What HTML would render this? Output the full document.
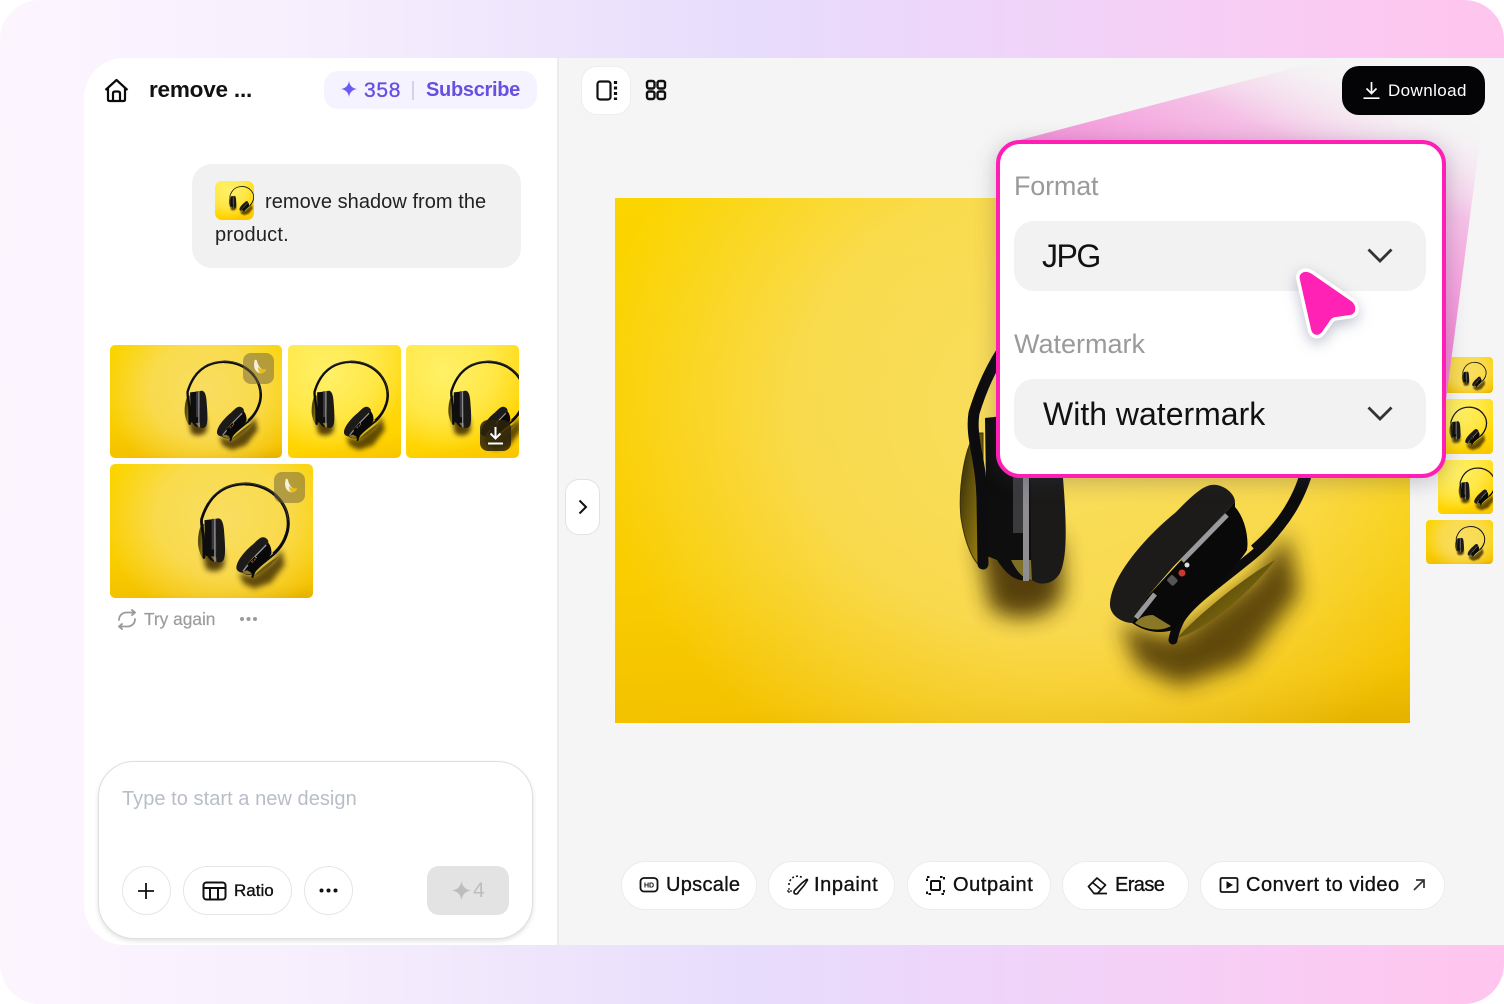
<!DOCTYPE html>
<html><head><meta charset="utf-8">
<style>
*{box-sizing:border-box;margin:0;padding:0}
html,body{width:1504px;height:1004px;overflow:hidden;background:#fff}
body{font-family:"Liberation Sans",sans-serif;color:#111;position:relative}
.a{position:absolute}
#bg{left:0;top:0;width:1504px;height:1004px;border-radius:40px;background:linear-gradient(90deg,#fdf5fe 0%,#f7effd 20%,#e7dcfc 50%,#f2d2f8 72%,#ffc5ee 100%)}
#left{left:84px;top:58px;width:475px;height:887px;background:#fff;border-radius:40px 0 0 40px;border-right:2px solid #ececec}
#right{left:559px;top:58px;width:945px;height:887px;background:#f5f5f5}
.t{position:absolute;white-space:nowrap;line-height:1}
.m{-webkit-text-stroke:.35px currentColor}
.img{position:absolute;overflow:hidden}
.img svg{position:absolute;left:0;top:0;width:100%;height:100%;display:block}
.by{background:radial-gradient(ellipse 58% 78% at 55% 40%,#f9dd60 0%,rgba(249,221,96,.8) 55%,rgba(249,221,96,0) 100%),linear-gradient(176deg,#fbd500 0%,#f9cd00 65%,#f4c200 90%,#e4b200 100%)}
.bb{background:radial-gradient(ellipse 70% 70% at 35% 25%,#fff067 0%,rgba(255,240,103,.6) 60%,rgba(255,240,103,0) 100%),linear-gradient(170deg,#ffe02a 0%,#ffd400 80%,#f8c400 100%)}
.pill{position:absolute;top:861px;height:49px;background:#fff;border:1px solid #ececec;border-radius:25px}
.ci{position:absolute;background:#fff;border:1.5px solid #e6e6e6}
.sel{position:absolute;left:1014px;width:412px;height:70px;background:#f2f2f2;border-radius:20px}
.badge{position:absolute;width:31px;height:31px;border-radius:8px;background:rgba(110,95,60,.5)}
</style></head><body>
<svg width="0" height="0" style="position:absolute">
<defs>
<filter id="b1" x="-60%" y="-60%" width="220%" height="220%"><feGaussianBlur stdDeviation="11"/></filter>
<linearGradient id="ray" gradientUnits="userSpaceOnUse" x1="1267" y1="264" x2="1359" y2="63">
<stop offset="0" stop-color="#f68cd8"/><stop offset=".55" stop-color="#f5c0e6"/><stop offset="1" stop-color="#f5f5f5" stop-opacity="0"/></linearGradient>
<linearGradient id="pl" x1="0" y1="0" x2="1" y2="1"><stop offset="0" stop-color="#2a2608"/><stop offset="1" stop-color="#a98a10"/></linearGradient>
<g id="hp">
<path d="M362 340L445 340L448 395C440 420 400 428 375 410Z" fill="#3a2600" opacity=".85" filter="url(#b1)"/>
<path d="M505 425L560 440L640 380L672 335L684 395L630 465L565 488L522 468Z" fill="#3a2600" opacity=".8" filter="url(#b1)"/>
<path d="M362 235C350 245 343 290 346 320C350 345 358 365 368 370L368 235Z" fill="url(#pl)" stroke="#3a3208" stroke-width="1"/>
<path d="M370 220L415 215L417 382C405 384 395 382 382 362L372 358Z" fill="#0e0e0e"/>
<path d="M396 362C402 374 408 381 417 382L416 362Z" fill="#7d6f26"/>
<rect x="398" y="215" width="14" height="120" fill="#3a3a3d"/>
<rect x="408" y="215" width="6" height="168" fill="#8d8d92"/>
<path d="M414 215C438 205 446 230 448 280C452 330 452 360 445 375C438 387 425 388 417 382L416 355Z" fill="#1b1a18"/>
<path d="M527 78C440 80 385 130 359 215C355 240 366 260 367 300L368 366" fill="none" stroke="#0d0d0f" stroke-width="11" stroke-linecap="round"/>
<path d="M527 78C640 78 715 170 695 262C686 300 668 328 640 352" fill="none" stroke="#0d0d0f" stroke-width="12"/>
<path d="M385 150C410 105 465 78 525 75C620 76 690 135 698 220" fill="none" stroke="#57575c" stroke-width="2"/>
<path d="M562 440C590 432 630 400 660 362C632 378 590 410 562 440Z" fill="url(#pl)"/>
<path d="M688 280C678 315 658 342 632 362C600 388 575 405 565 422C561 430 559 436 558 442" fill="none" stroke="#0c0c0e" stroke-width="9" stroke-linecap="round"/>
<path d="M620 309C630 320 634 340 632 352C625 365 590 400 558 432C545 436 530 434 517 425L532 399L620 304Z" fill="#090909"/>
<path d="M520 425C530 432 545 434 556 428L538 417C530 417 524 420 520 425Z" fill="#8a7826"/>
<path d="M495 405C497 375 535 335 560 315C580 295 590 285 602 287C612 289 620 297 620 304L592 334L558 369L532 399L517 425C508 425 494 418 495 405Z" fill="#1c1b19"/>
<path d="M521 420L540 396M567 363L612 317" fill="none" stroke="#9a9a9e" stroke-width="5"/>
<circle cx="567" cy="375" r="3.500" fill="#c9392e"/>
<circle cx="572" cy="367" r="2.500" fill="#ddd"/>
<rect x="553" y="378" width="8" height="9" rx="2" fill="#555" transform="rotate(-45 557 382)"/>
</g>
<path id="st" d="M8 0C8.700 4.600 11.400 7.300 16 8C11.400 8.700 8.700 11.400 8 16C7.300 11.400 4.600 8.700 0 8C4.600 7.300 7.300 4.600 8 0Z"/>
<g id="ban"><path d="M7 2C5 7 6 13 11 15C14 16 17 14 17 12C13 12 10 8 9 3Z" fill="#f5f0da"/><path d="M10 9C12 11 15 12 18 11C18 14 15 16 12 15C10.500 14 10 11 10 9Z" fill="#e8bf12"/><path d="M6 3L8 1.500L9 3" fill="#f5f0da"/></g>
</defs></svg>

<div id="bg" class="a"></div>
<div id="left" class="a"></div>
<div id="right" class="a"></div>

<svg class="a" style="left:104px;top:78px" width="25" height="25" viewBox="0 0 25 25" fill="none" stroke="#0b0b0b" stroke-width="2.200" stroke-linejoin="round"><path d="M1.500 12L12.500 2L23.500 12"/><path d="M4 10V21.500Q4 23 5.500 23H19.500Q21 23 21 21.500V10"/><path d="M9 23V15.500Q9 13.500 11 13.500H14Q16 13.500 16 15.500V23"/></svg>
<div class="t" style="left:149px;top:79px;font-size:22.500px;font-weight:700;letter-spacing:-.2px">remove ...</div>

<div class="a" style="left:324px;top:71px;width:213px;height:38px;background:#f5f3ff;border-radius:14px"></div>
<svg class="a" style="left:341px;top:81px;fill:#6a5cf0" width="16" height="16" viewBox="0 0 16 16"><use href="#st"/></svg>
<div class="t m" style="left:364px;top:80px;font-size:21px;color:#6650e0;letter-spacing:.7px">358</div>
<div class="a" style="left:412px;top:81px;width:1.500px;height:19px;background:#d5d0ee"></div>
<div class="t" style="left:426px;top:80px;font-size:20px;color:#6650e0;font-weight:700;letter-spacing:-.3px">Subscribe</div>

<div class="a" style="left:192px;top:164px;width:329px;height:104px;background:#f1f1f1;border-radius:20px"></div>
<div class="img bb" style="left:215px;top:181px;width:39px;height:39px;border-radius:7px"><svg viewBox="146 0 557 557"><use href="#hp"/></svg></div>
<div class="t" style="left:265px;top:192px;font-size:20px;color:#222;letter-spacing:.05px">remove shadow from the</div>
<div class="t" style="left:215px;top:225px;font-size:20px;color:#222;letter-spacing:.2px">product.</div>

<div class="img by" style="left:110px;top:345px;width:172px;height:113px;border-radius:5px"><svg viewBox="0 0 795 525"><use href="#hp"/></svg></div>
<div class="img bb" style="left:288px;top:345px;width:113px;height:113px;border-radius:5px"><svg viewBox="235 0 525 525"><use href="#hp"/></svg></div>
<div class="img bb" style="left:406px;top:345px;width:113px;height:113px;border-radius:5px"><svg viewBox="148 0 525 525"><use href="#hp"/></svg></div>
<div class="img by" style="left:110px;top:464px;width:203px;height:134px;border-radius:5px"><svg viewBox="0 0 795 525"><use href="#hp"/></svg></div>
<div class="badge" style="left:243px;top:353px"><svg style="position:absolute;left:5px;top:5px" width="21" height="21" viewBox="0 0 21 21"><use href="#ban"/></svg></div>
<div class="badge" style="left:274px;top:472px"><svg style="position:absolute;left:5px;top:5px" width="21" height="21" viewBox="0 0 21 21"><use href="#ban"/></svg></div>
<div class="badge" style="left:480px;top:420px;background:rgba(45,35,10,.85)"><svg style="position:absolute;left:6px;top:6px" width="19" height="19" viewBox="0 0 19 19" fill="none" stroke="#fff" stroke-width="2"><path d="M9.500 1V12M4.500 7.500L9.500 12.500L14.500 7.500M2 17.500H17"/></svg></div>

<svg class="a" style="left:117px;top:609px" width="20" height="21" viewBox="0 0 20 21" fill="none" stroke="#9b9b9b" stroke-width="1.800" stroke-linecap="round" stroke-linejoin="round"><path d="M2 11C2 6.500 5.500 3.500 9.500 3.500H18M15 1L18 3.500L15 6"/><path d="M18 10C18 14.500 14.500 17.500 10.500 17.500H2M5 15L2 17.500L5 20"/></svg>
<div class="t m" style="left:144px;top:611px;font-size:17.300px;color:#9c9c9c;-webkit-text-stroke:.2px #9c9c9c">Try again</div>
<svg class="a" style="left:239px;top:616px" width="19" height="6" fill="#9b9b9b"><circle cx="3" cy="3" r="2"/><circle cx="9.500" cy="3" r="2"/><circle cx="16" cy="3" r="2"/></svg>

<div class="a" style="left:98px;top:761px;width:435px;height:178px;background:#fff;border:1.500px solid #dfdfdf;border-radius:36px;box-shadow:0 2px 5px rgba(0,0,0,.12)"></div>
<div class="t" style="left:122px;top:789px;font-size:20px;color:#b8bdc8;letter-spacing:.05px">Type to start a new design</div>
<div class="ci" style="left:122px;top:866px;width:49px;height:49px;border-radius:50%"></div>
<svg class="a" style="left:136px;top:881px" width="20" height="20" fill="none" stroke="#111" stroke-width="1.800"><path d="M10 2V18M2 10H18"/></svg>
<div class="ci" style="left:183px;top:866px;width:109px;height:49px;border-radius:25px"></div>
<svg class="a" style="left:202px;top:881px" width="25" height="20" fill="none" stroke="#111" stroke-width="2"><rect x="1.500" y="1.500" width="22" height="17" rx="3"/><path d="M1.500 7H23.500M8 7V18.500M16 7V18.500"/></svg>
<div class="t m" style="left:234px;top:882px;font-size:17px">Ratio</div>
<div class="ci" style="left:304px;top:866px;width:49px;height:49px;border-radius:50%"></div>
<svg class="a" style="left:319px;top:887px" width="19" height="7" fill="#111"><circle cx="2.500" cy="3.500" r="2"/><circle cx="9.500" cy="3.500" r="2"/><circle cx="16.500" cy="3.500" r="2"/></svg>
<div class="a" style="left:427px;top:866px;width:82px;height:49px;background:#e3e3e3;border-radius:12px"></div>
<svg class="a" style="left:452px;top:881px;fill:#bdbdbd" width="19" height="19" viewBox="0 0 16 16"><use href="#st"/></svg>
<div class="t" style="left:473px;top:880px;font-size:21px;color:#bdbdbd">4</div>

<div class="a" style="left:581px;top:66px;width:50px;height:49px;background:#fff;border:1px solid #eee;border-radius:16px"></div>
<svg class="a" style="left:596px;top:80px" width="22" height="21" fill="none" stroke="#111" stroke-width="2.200"><rect x="1.500" y="1.500" width="13" height="18" rx="2.500"/><path d="M19.500 1V20" stroke-dasharray="3 2.500" stroke-width="3.200"/></svg>
<svg class="a" style="left:645px;top:79px" width="22" height="22" fill="none" stroke="#111" stroke-width="2.400"><rect x="2" y="2" width="7.500" height="7.500" rx="2"/><rect x="12.500" y="2" width="7.500" height="7.500" rx="2"/><rect x="2" y="12.500" width="7.500" height="7.500" rx="2"/><rect x="12.500" y="12.500" width="7.500" height="7.500" rx="2"/></svg>

<div class="a" style="left:565px;top:479px;width:35px;height:56px;background:#fff;border:1px solid #e2e2e2;border-radius:14px"></div>
<svg class="a" style="left:577px;top:499px" width="12" height="16" fill="none" stroke="#111" stroke-width="2"><path d="M2.500 1.500L9 8L2.500 14.500"/></svg>

<div class="img by" style="left:615px;top:198px;width:795px;height:525px"><svg viewBox="0 0 795 525"><use href="#hp"/></svg></div>

<div class="img by" style="left:1438px;top:357px;width:55px;height:36px;border-radius:4px"><svg viewBox="0 0 795 525"><use href="#hp"/></svg></div>
<div class="img bb" style="left:1438px;top:399px;width:55px;height:55px;border-radius:4px"><svg viewBox="235 0 525 525"><use href="#hp"/></svg></div>
<div class="img bb" style="left:1438px;top:460px;width:55px;height:54px;border-radius:4px"><svg viewBox="148 0 525 525"><use href="#hp"/></svg></div>
<div class="img by" style="left:1426px;top:520px;width:67px;height:44px;border-radius:4px"><svg viewBox="0 0 795 525"><use href="#hp"/></svg></div>

<svg class="a" style="left:0;top:0" width="1504" height="1004"><polygon points="1020,140 1332,58 1400,58 1482,125 1446,400 1400,420 1020,300" fill="url(#ray)"/></svg>

<div class="a" style="left:1342px;top:66px;width:143px;height:49px;background:#040305;border-radius:17px"></div>
<svg class="a" style="left:1362px;top:81px" width="19" height="19" fill="none" stroke="#fff" stroke-width="1.700"><path d="M9.500 1V12M4.500 7.500L9.500 12.500L14.500 7.500M1.500 17.200H17.500"/></svg>
<div class="t" style="left:1388px;top:82px;font-size:17px;color:#fff;letter-spacing:.4px">Download</div>

<div class="a" style="left:996px;top:140px;width:450px;height:338px;background:#fff;border:4px solid #ff1fb5;border-radius:24px;box-shadow:0 4px 22px rgba(60,60,90,.28)"></div>
<div class="t" style="left:1014px;top:173px;font-size:27px;color:#9a9a9a;letter-spacing:-.2px">Format</div>
<div class="sel" style="top:221px"></div>
<div class="t" style="left:1042px;top:240px;font-size:32px;color:#111;letter-spacing:-1.500px">JPG</div>
<svg class="a" style="left:1366px;top:246px" width="28" height="20" fill="none" stroke="#333" stroke-width="2.800"><path d="M2.500 3.500L14 15L25.500 3.500"/></svg>
<div class="t" style="left:1014px;top:331px;font-size:27px;color:#9a9a9a">Watermark</div>
<div class="sel" style="top:379px"></div>
<div class="t" style="left:1043px;top:398px;font-size:32px;color:#111">With watermark</div>
<svg class="a" style="left:1366px;top:404px" width="28" height="20" fill="none" stroke="#333" stroke-width="2.800"><path d="M2.500 3.500L14 15L25.500 3.500"/></svg>

<svg class="a" style="left:1285px;top:255px;overflow:visible" width="90" height="95" viewBox="1285 255 90 95"><path d="M1302 273C1305 271 1309 272 1312 274L1351 301C1357 305 1357 314 1350 315L1336 317C1333 317 1331 319 1329 322L1322 332C1318 337 1312 335 1311 329L1300 280C1299 277 1300 274 1302 273Z" fill="#ff22b5" stroke="#fff" stroke-width="7" stroke-linejoin="round" paint-order="stroke" style="filter:drop-shadow(0 5px 7px rgba(50,60,100,.3))"/></svg>

<div class="pill" style="left:621px;width:136px"></div>
<svg class="a" style="left:639px;top:876px" width="20" height="18" fill="none" stroke="#111" stroke-width="1.800"><rect x="1.500" y="2" width="17" height="13.500" rx="3.500"/><text x="10" y="11.500" font-family="Liberation Sans" font-size="7" font-weight="700" text-anchor="middle" fill="#111" stroke="none">HD</text></svg>
<div class="t m" style="left:666px;top:875px;font-size:20px;letter-spacing:.3px">Upscale</div>

<div class="pill" style="left:768px;width:127px"></div>
<svg class="a" style="left:786px;top:874px" width="23" height="23" fill="none" stroke="#111" stroke-width="1.600"><path d="M3 11A8.500 8.500 0 0 1 16 3.500" stroke-dasharray="2 2"/><path d="M3 14L3 20M1 17H6" stroke-width="1.200" stroke-dasharray="2 1"/><path d="M10 20C8 20 7.500 18 8.500 16.500L16 9L20.500 5.500C21 5 21.500 5.500 21.500 6L18 11.500L12.500 18C12 19.500 11 20 10 20Z"/></svg>
<div class="t m" style="left:814px;top:875px;font-size:20px;letter-spacing:.6px">Inpaint</div>

<div class="pill" style="left:907px;width:144px"></div>
<svg class="a" style="left:925px;top:875px" width="21" height="21" fill="none" stroke="#111" stroke-width="2"><rect x="6" y="6" width="9" height="9" rx="1"/><path d="M2 6V2H6M15 2H19V6M19 15V19H15M6 19H2V15" stroke-dasharray="2.500 1.500"/></svg>
<div class="t m" style="left:953px;top:875px;font-size:20px;letter-spacing:.6px">Outpaint</div>

<div class="pill" style="left:1062px;width:127px"></div>
<svg class="a" style="left:1087px;top:876px" width="21" height="19" fill="none" stroke="#111" stroke-width="1.700" stroke-linejoin="round"><path d="M1.500 10.500L10 2L18.500 9L10.500 17.500H7Z"/><path d="M5.500 6.500L14 13.500M7 17.500H20"/></svg>
<div class="t m" style="left:1115px;top:875px;font-size:20px;letter-spacing:-.6px">Erase</div>

<div class="pill" style="left:1200px;width:245px"></div>
<svg class="a" style="left:1219px;top:876px" width="20" height="18" fill="none" stroke="#111" stroke-width="1.800"><rect x="1.500" y="2" width="17" height="14" rx="1.500"/><path d="M8 6L13 9L8 12Z" fill="#111" stroke-width="1"/></svg>
<div class="t m" style="left:1246px;top:875px;font-size:20px;letter-spacing:.5px">Convert to video</div>
<svg class="a" style="left:1412px;top:878px" width="14" height="14" fill="none" stroke="#333" stroke-width="1.700"><path d="M2 12L12 2M4 2H12V10"/></svg>
</body></html>
